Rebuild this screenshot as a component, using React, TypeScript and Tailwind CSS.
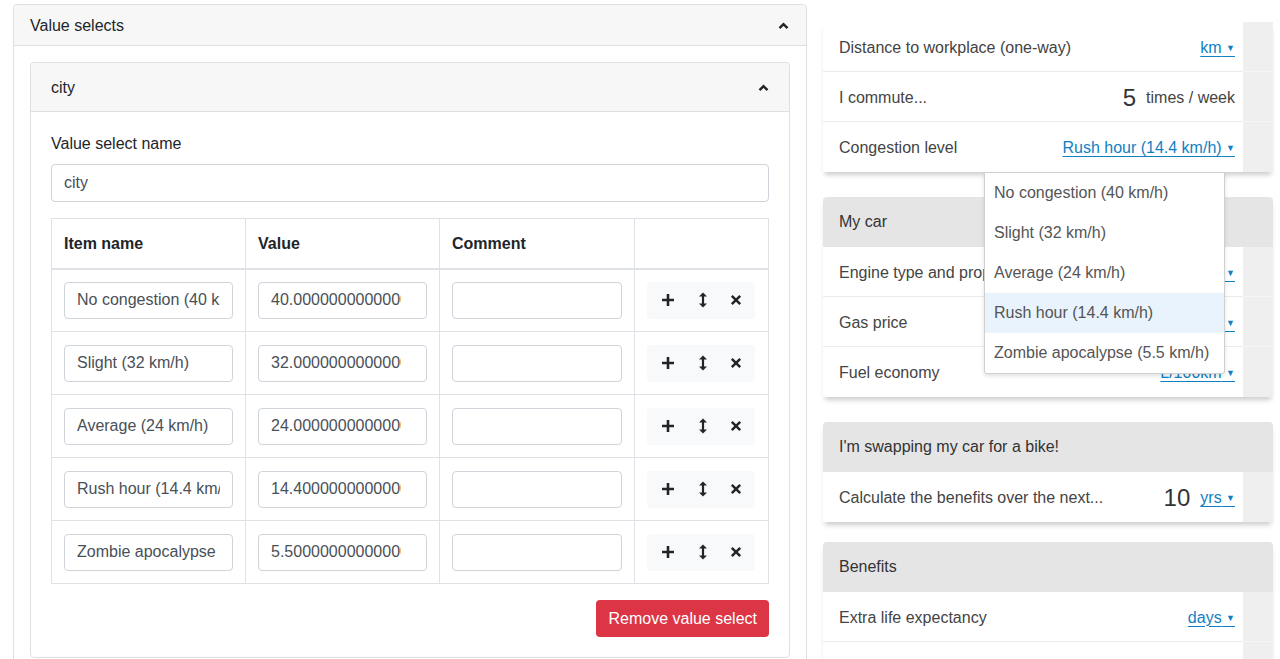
import React from 'react';

const font = { fontFamily: '"Liberation Sans", Arial, sans-serif' };

const items = [
  { name: 'No congestion (40 km/h)', value: '40.000000000000004' },
  { name: 'Slight (32 km/h)', value: '32.000000000000004' },
  { name: 'Average (24 km/h)', value: '24.000000000000004' },
  { name: 'Rush hour (14.4 km/h)', value: '14.400000000000002' },
  { name: 'Zombie apocalypse (5.5 km/h)', value: '5.5000000000000004' },
];

const ChevronUp = () => (
  <svg width="11" height="8" viewBox="0 0 11 8" fill="none">
    <path d="M1.5 6.2 L5.5 2.2 L9.5 6.2" stroke="#212529" strokeWidth="2.4" />
  </svg>
);

const PlusIcon = () => (
  <svg width="14" height="14" viewBox="0 0 14 14">
    <path d="M7 1v12M1 7h12" stroke="#212529" strokeWidth="2.6" />
  </svg>
);

const UpDownIcon = () => (
  <svg width="10" height="16" viewBox="0 0 10 16">
    <path d="M5 3v10" stroke="#212529" strokeWidth="2.2" />
    <path d="M5 0.5 L9 4.5 H1 Z M5 15.5 L9 11.5 H1 Z" fill="#212529" />
  </svg>
);

const XIcon = () => (
  <svg width="12" height="12" viewBox="0 0 12 12">
    <path d="M1.8 1.8l8.4 8.4M10.2 1.8l-8.4 8.4" stroke="#212529" strokeWidth="2.5" />
  </svg>
);

const Unit = ({ children }: { children: React.ReactNode }) => (
  <span className="text-[#117fc1] underline underline-offset-[3px] decoration-1">
    {children} <span className="text-[9px] align-[2px]">▼</span>
  </span>
);

const Row = ({ label, right, last }: { label: string; right?: React.ReactNode; last?: boolean }) => (
  <div className="flex h-[50px]">
    <div className={`flex-1 bg-white pl-4 pr-2 pt-[2px] flex items-center justify-between ${last ? '' : 'border-b border-[#ebebeb]'}`}>
      <span className="text-[16px] text-[#444]">{label}</span>
      {right}
    </div>
    <div className={`w-[30px] bg-[#efefef] ${last ? '' : 'border-b border-[#f6f6f6]'}`}></div>
  </div>
);

const Header = ({ title }: { title: string }) => (
  <div className="h-[50px] bg-[#e5e5e5] rounded-t-[4px] pl-4 flex items-center text-[16px] text-[#333]">{title}</div>
);

const Field = ({ text, clip }: { text: string; clip?: boolean }) => (
  <div className="h-[37px] border border-[#ced4da] rounded-[4px] px-3 flex items-center text-[#495057]">
    <span className={`block min-w-0 overflow-hidden whitespace-nowrap ${clip ? 'w-[130px]' : 'w-full'}`}>{text}</span>
  </div>
);

const cardShadow = 'shadow-[0_5px_5px_-2px_rgba(0,0,0,0.2)]';

export default function App() {
  return (
    <div className="h-[659px] overflow-hidden bg-white flex text-[#212529]" style={font}>
      {/* left: value select editor */}
      <div className="w-[794px] ml-[13px] mt-[4px] shrink-0">
        <div className="border border-[#dfdfdf] rounded-[4px]">
          <div className="h-[41px] bg-[#f7f7f7] border-b border-[#dfdfdf] px-4 pt-[1px] flex items-center justify-between rounded-t-[4px]">
            <span className="text-[16px]">Value selects</span>
            <span className="mr-[1px]"><ChevronUp /></span>
          </div>
          <div className="p-4">
            <div className="border border-[#dfdfdf] rounded-[4px]">
              <div className="h-[49px] bg-[#f7f7f7] border-b border-[#dfdfdf] px-5 pt-[1px] flex items-center justify-between rounded-t-[4px]">
                <span className="text-[16px]">city</span>
                <ChevronUp />
              </div>
              <div className="p-5">
                <div className="text-[16px] leading-6 mb-2">Value select name</div>
                <div className="h-[38px] border border-[#ced4da] rounded-[4px] px-3 flex items-center text-[16px] text-[#495057]">city</div>
                <table className="w-full mt-4 border-collapse table-fixed text-[16px]">
                  <colgroup>
                    <col className="w-[194px]" />
                    <col className="w-[194px]" />
                    <col className="w-[195px]" />
                    <col />
                  </colgroup>
                  <thead>
                    <tr className="h-[50px]">
                      <th className="border border-[#dee2e6] border-b-2 text-left px-3 pt-[1px] font-bold">Item name</th>
                      <th className="border border-[#dee2e6] border-b-2 text-left px-3 pt-[1px] font-bold">Value</th>
                      <th className="border border-[#dee2e6] border-b-2 text-left px-3 pt-[1px] font-bold">Comment</th>
                      <th className="border border-[#dee2e6] border-b-2"></th>
                    </tr>
                  </thead>
                  <tbody>
                    {items.map((it) => (
                      <tr key={it.name} className="h-[63px]">
                        <td className="border border-[#dee2e6] px-3">
                          <Field text={it.name} />
                        </td>
                        <td className="border border-[#dee2e6] px-3">
                          <Field text={it.value} clip />
                        </td>
                        <td className="border border-[#dee2e6] px-3">
                          <div className="h-[37px] border border-[#ced4da] rounded-[4px]"></div>
                        </td>
                        <td className="border border-[#dee2e6] px-3">
                          <div className="w-[108px] h-[37px] bg-[#f8f9fa] rounded-[4px] flex items-center">
                            <span className="w-[40px] flex justify-center pl-[1px]"><PlusIcon /></span>
                            <span className="w-[32px] flex justify-center"><UpDownIcon /></span>
                            <span className="w-[36px] flex justify-center pr-[2px]"><XIcon /></span>
                          </div>
                        </td>
                      </tr>
                    ))}
                  </tbody>
                </table>
                <div className="flex justify-end mt-4">
                  <button className="h-[37px] px-3 bg-[#dc3545] text-white text-[16px] rounded-[4px]">Remove value select</button>
                </div>
              </div>
            </div>
          </div>
        </div>
      </div>

      {/* right: commute calculator */}
      <div className="w-[450px] ml-4 pt-[22px] shrink-0">
        <div className={`relative rounded-tr-[4px] ${cardShadow} mb-[25px]`}>
          <Row label="Distance to workplace (one-way)" right={<Unit>km</Unit>} />
          <Row
            label="I commute..."
            right={
              <span className="flex items-center text-[#444]">
                <span className="text-[24px] leading-none text-[#333] mr-[10px]">5</span>
                <span className="text-[16px]">times / week</span>
              </span>
            }
          />
          <Row label="Congestion level" right={<Unit>Rush hour (14.4 km/h)</Unit>} last />
          <div className="absolute left-[161px] top-[150px] w-[241px] bg-white border border-[#cfcfcf] rounded-b-[3px] shadow-[0_2px_4px_rgba(0,0,0,0.12)] z-10">
            {items.map((it, i) => (
              <div key={it.name} className={`h-[40px] px-[9px] flex items-center text-[16px] text-[#555] ${i === 3 ? 'bg-[#e8f3fd] text-[#333]' : ''}`}>
                {it.name}
              </div>
            ))}
          </div>
        </div>

        <div className={`${cardShadow} mb-[25px]`}>
          <Header title="My car" />
          <Row label="Engine type and properties" right={<Unit>Petrol</Unit>} />
          <Row label="Gas price" right={<Unit>€/L</Unit>} />
          <Row label="Fuel economy" right={<Unit>L/100km</Unit>} last />
        </div>

        <div className={`${cardShadow} mb-[20px]`}>
          <Header title="I'm swapping my car for a bike!" />
          <Row
            label="Calculate the benefits over the next..."
            right={
              <span className="flex items-center">
                <span className="text-[24px] leading-none text-[#333] mr-[10px]">10</span>
                <Unit>yrs</Unit>
              </span>
            }
            last
          />
        </div>

        <div className={cardShadow}>
          <Header title="Benefits" />
          <Row label="Extra life expectancy" right={<Unit>days</Unit>} />
          <Row label="Money saved" right={<Unit>€</Unit>} last />
        </div>
      </div>
    </div>
  );
}
